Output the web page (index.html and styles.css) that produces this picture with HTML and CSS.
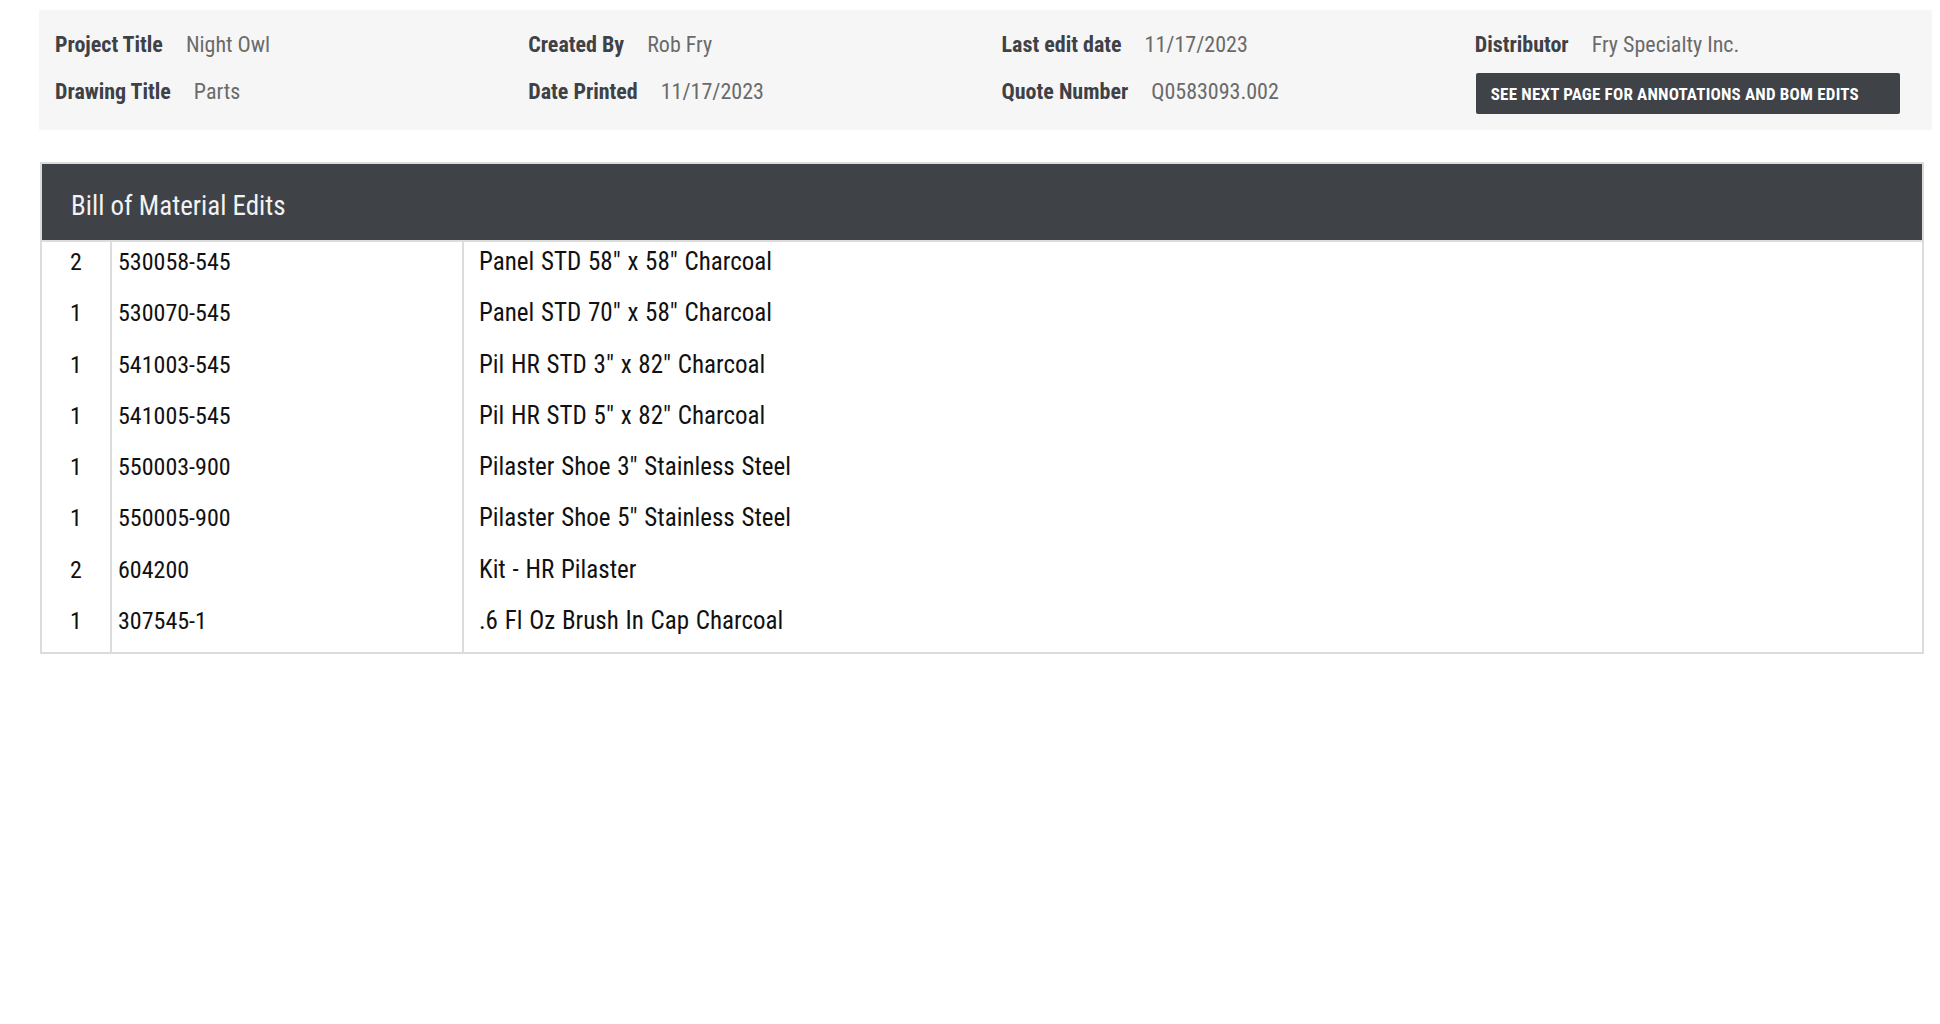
FILE: index.html
```html
<!DOCTYPE html>
<html>
<head>
<meta charset="utf-8">
<link rel="stylesheet" href="styles.css">
</head>
<body>
<div class="page">
  <section class="info">
    <div class="info-col">
      <div class="field"><span class="label">Project Title</span><span class="value">Night Owl</span></div>
      <div class="field"><span class="label">Drawing Title</span><span class="value">Parts</span></div>
    </div>
    <div class="info-col">
      <div class="field"><span class="label">Created By</span><span class="value">Rob Fry</span></div>
      <div class="field"><span class="label">Date Printed</span><span class="value">11/17/2023</span></div>
    </div>
    <div class="info-col">
      <div class="field"><span class="label">Last edit date</span><span class="value">11/17/2023</span></div>
      <div class="field"><span class="label">Quote Number</span><span class="value">Q0583093.002</span></div>
    </div>
    <div class="info-col">
      <div class="field"><span class="label">Distributor</span><span class="value">Fry Specialty Inc.</span></div>
      <div class="notice">SEE NEXT PAGE FOR ANNOTATIONS AND BOM EDITS</div>
    </div>
  </section>

  <section class="bom">
    <div class="bom-head">Bill of Material Edits</div>
    <div class="bom-body">
      <div class="col qty">
        <div class="cell">2</div><div class="cell">1</div><div class="cell">1</div><div class="cell">1</div>
        <div class="cell">1</div><div class="cell">1</div><div class="cell">2</div><div class="cell">1</div>
      </div>
      <div class="col part">
        <div class="cell">530058-545</div><div class="cell">530070-545</div><div class="cell">541003-545</div><div class="cell">541005-545</div>
        <div class="cell">550003-900</div><div class="cell">550005-900</div><div class="cell">604200</div><div class="cell">307545-1</div>
      </div>
      <div class="col desc">
        <div class="cell">Panel STD 58" x 58" Charcoal</div>
        <div class="cell">Panel STD 70" x 58" Charcoal</div>
        <div class="cell">Pil HR STD 3" x 82" Charcoal</div>
        <div class="cell">Pil HR STD 5" x 82" Charcoal</div>
        <div class="cell">Pilaster Shoe 3" Stainless Steel</div>
        <div class="cell">Pilaster Shoe 5" Stainless Steel</div>
        <div class="cell">Kit - HR Pilaster</div>
        <div class="cell">.6 Fl Oz Brush In Cap Charcoal</div>
      </div>
    </div>
  </section>
</div>
</body>
</html>
```

FILE: styles.css
```css
* { box-sizing: border-box; }
html, body { margin: 0; padding: 0; background: #fff; }
body {
  font-family: "Roboto Condensed", "Liberation Sans Narrow", Roboto, sans-serif;
  color: #1d1d1f;
}
.page { padding: 10px 8px 0 39px; }

.info {
  display: grid;
  grid-template-columns: repeat(4, 1fr);
  width: 1893px;
  height: 120px;
  background: #f6f6f6;
  padding-top: 20px;
}
.info-col {
  display: flex;
  flex-direction: column;
  gap: 19px;
  padding-left: 16px;
}
.field { display: flex; align-items: center; height: 28px; }
.label { font-weight: 700; font-size: 22px; color: #3e4146; margin-right: 23px; }
.value { font-size: 22px; color: #6a6a6a; }
.notice {
  margin-top: -4px;
  margin-left: 1px;
  width: 424px;
  height: 41px;
  background: #3f4247;
  border-radius: 2px;
  color: #fff;
  font-weight: 700;
  font-size: 17px;
  letter-spacing: 0.2px;
  display: flex;
  align-items: center;
  padding-left: 15px;
}

.bom {
  margin-top: 32px;
  margin-left: 1px;
  width: 1884px;
  border: 2px solid #dcdcdc;
}
.bom-head {
  height: 78px;
  background: #3f4247;
  color: #f2f2f2;
  font-size: 27px;
  display: flex;
  align-items: center;
  padding-left: 29px;
  padding-top: 7px;
  border-bottom: 2px solid #dcdcdc;
}
.bom-body { display: flex; }
.col { display: flex; flex-direction: column; }
.qty { width: 70px; border-right: 2px solid #dcdcdc; text-align: center; }
.part { width: 352px; border-right: 2px solid #dcdcdc; padding-left: 6px; }
.desc { flex: 1; padding-left: 15px; }
.cell {
  height: 51.25px;
  font-size: 24px;
  line-height: 28px;
  padding-top: 6px;
  color: #111;
}
.desc .cell { font-size: 25px; word-spacing: 1px; }
```
